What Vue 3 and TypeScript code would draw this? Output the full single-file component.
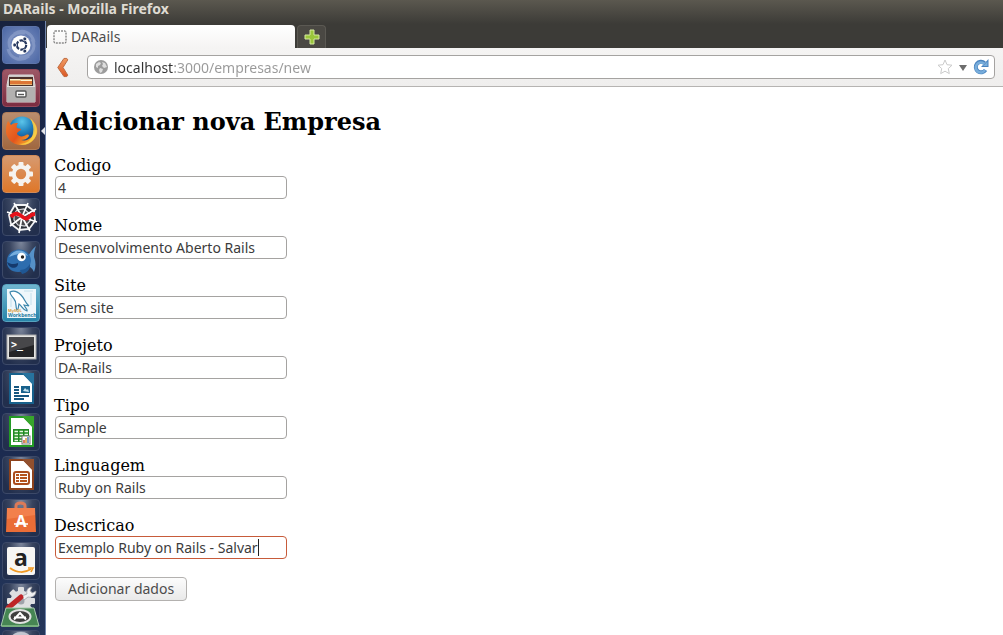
<script setup lang="ts">
import { computed, onMounted, ref } from 'vue'

interface Field {
  id: string
  label: string
  value: string
}

const fields = ref<Field[]>([
  { id: 'codigo', label: 'Codigo', value: '4' },
  { id: 'nome', label: 'Nome', value: 'Desenvolvimento Aberto Rails' },
  { id: 'site', label: 'Site', value: 'Sem site' },
  { id: 'projeto', label: 'Projeto', value: 'DA-Rails' },
  { id: 'tipo', label: 'Tipo', value: 'Sample' },
  { id: 'linguagem', label: 'Linguagem', value: 'Ruby on Rails' },
  { id: 'descricao', label: 'Descricao', value: 'Exemplo Ruby on Rails - Salvar' },
])
const activeId = 'descricao'

const host = 'localhost'
const address = ref(host + ':3000/empresas/new')
const hostWidth = ref(62)
const textWidth = ref(200)

function measure(text: string, font: string): number {
  const ctx = document.createElement('canvas').getContext('2d')
  if (!ctx) return 0
  ctx.font = font
  return Math.round(ctx.measureText(text).width)
}

const hostStop = computed(() => ({ '--host-width': hostWidth.value + 'px' }))
const caretPosition = computed(() => ({ left: textWidth.value + 3 + 'px' }))

onMounted(() => {
  hostWidth.value = measure(host, '14px "Noto Sans"')
  textWidth.value = measure(fields.value[6].value, '14px "Noto Sans"')
})

const gearTeeth = [0, 45, 90, 135, 180, 225, 270, 315]
</script>

<template>
  <div class="desktop">
    <header class="titlebar">DARails - Mozilla Firefox</header>
    <div class="workspace">
      <nav class="launcher" aria-label="Launcher">
        <button class="tile dash" type="button" aria-label="Dash">
          <svg viewBox="0 0 38 38">
            <g fill="none" stroke="#a9b9dc" stroke-opacity=".4" stroke-width="3">
              <path d="M9 24C3 13 12 5 23 7M30 13c6 11-3 19-13 18M12 8c9-6 18-1 20 8M27 30C18 37 8 32 6 23" />
            </g>
            <circle cx="19" cy="19" r="9.5" fill="#fff" />
            <circle cx="19.5" cy="19" r="4.7" fill="none" stroke="#26385f" stroke-width="2.2" stroke-dasharray="8.4 1.4" />
            <g fill="#26385f" stroke="#fff" stroke-width=".7">
              <circle cx="12.7" cy="19" r="1.9" /><circle cx="22.8" cy="12.9" r="1.9" /><circle cx="22.8" cy="25.1" r="1.9" />
            </g>
          </svg>
        </button>
        <button class="tile files" type="button" aria-label="Files">
          <svg viewBox="0 0 38 38">
            <path d="M7 6h24l2 10v17H5V16z" fill="#c9c7c5" stroke="#dddbda" />
            <rect x="7" y="8" width="24" height="9" fill="#4a302a" />
            <path d="M8 10h22v6H8z" fill="#e9b878" />
            <path d="M8 12h22v3H8z" fill="#dd7636" />
            <path d="M8 10.5h10l1 1h11" fill="none" stroke="#fff3cf" />
            <rect x="5" y="17" width="28" height="16" fill="#b3b1b0" />
            <path d="M5 17.500h28" stroke="#e2e0df" />
            <rect x="14" y="22" width="10" height="6" rx="1" fill="#fff" stroke="#555" stroke-width="1.4" />
            <path d="M16 25.5h6" stroke="#555" stroke-width="1.4" />
          </svg>
        </button>
        <div class="running">
          <button class="tile firefox" type="button" aria-label="Firefox">
            <svg viewBox="0 0 38 38">
              <defs>
                <radialGradient id="globe" cx=".5" cy=".2" r=".8">
                  <stop offset="0" stop-color="#5cc5ea" /><stop offset=".5" stop-color="#1f80bd" /><stop offset="1" stop-color="#153979" />
                </radialGradient>
                <linearGradient id="fox" x1="0" y1="0" x2="1" y2=".6">
                  <stop offset="0" stop-color="#f07a2c" /><stop offset=".55" stop-color="#e4551d" /><stop offset="1" stop-color="#f9b42d" />
                </linearGradient>
              </defs>
              <circle cx="20" cy="17.500" r="13" fill="url(#globe)" />
              <path d="M6 9l3 4c2-2 5-2 7-2-1 2-2 3-1 5l4 1c0 2-4 2-4 5 2 3 6 3 9 1 2-1 3 0 3 1-2 3-5 4-8 4 7 2 13-3 14-11 0-3-1-6-3-9 4 3 6 8 5 13-2 8-8 12-15 12C9 33 3 25 4 17c0-3 1-6 2-8z" fill="url(#fox)" />
              <path d="M28 6c8 6 9 16 3 22-4 4-9 6-14 4 8 0 13-4 14-11 1-5 0-10-3-15z" fill="#f8d24a" fill-opacity=".85" />
            </svg>
          </button>
        </div>
        <button class="tile settings" type="button" aria-label="System Settings">
          <svg viewBox="0 0 38 38">
            <g fill="#f6f3ef">
              <rect v-for="angle in gearTeeth" :key="angle" x="16.5" y="7" width="5" height="6" rx="1" :transform="`rotate(${angle} 19 19)`" />
            </g>
            <circle cx="19" cy="19" r="7.2" fill="none" stroke="#f6f3ef" stroke-width="4" />
          </svg>
        </button>
        <button class="tile" type="button" aria-label="Spider">
          <svg viewBox="0 0 38 38">
            <path d="M13 7h11l8 6 1 10-6 8-10 1-8-6-2-9z" fill="#2c3038" stroke="#f2f3f5" stroke-width="1.8" />
            <path d="M15 12l7-1 6 5v7l-5 5-7-1-4-5v-6z" fill="#4b4b4f" stroke="#d5d6da" stroke-width="1.2" />
            <path d="M20 19L12 5M20 19l6-14M20 19l14-8M20 19l15 5M20 19l8 14M20 19l-3 16M20 19L8 28M20 19L5 14" stroke="#fff" stroke-width="1.7" />
            <path d="M9 19c3-4 6-4 9-2s5 5 8 3c3-3 3-4 7-4" fill="none" stroke="#e5121a" stroke-width="3.800" />
          </svg>
        </button>
        <button class="tile" type="button" aria-label="Bluefish">
          <svg viewBox="0 0 38 38">
            <path d="M25 17c2-3 4-8 9-12-2 5-2 8-2 11 2 5 2 10 0 15-2-4-4-6-8-7z" fill="#5590c6" />
            <path d="M5 20C5 11 14 7 21 9c6 2 8 7 8 11-1 7-6 11-13 11C9 31 4 26 5 20z" fill="#2d6dae" />
            <path d="M7 16c4-8 15-9 19-1-6-3-13-2-19 1z" fill="#76aede" />
            <path d="M5 21c3 2 7 3 11 1 1 5-8 8-11-1z" fill="#153a6d" />
            <path d="M18 29c5 0 8-3 10-6 1 5-3 9-8 10z" fill="#1f5794" />
            <circle cx="19.500" cy="16" r="4.3" fill="#fff" /><circle cx="20.500" cy="16" r="1.7" fill="#222" />
          </svg>
        </button>
        <button class="tile workbench" type="button" aria-label="MySQL Workbench">
          <svg viewBox="0 0 38 38">
            <rect x="5" y="5" width="29" height="29" fill="#eef7fb" />
            <path d="M9 23V14M29 9v12M22 7h9" stroke="#c3e0ec" />
            <path d="M8 8c4-2 8 0 11 3 4 4 4 8 8 11l-5-1c2 4 4 5 3 6-4-1-5-5-8-7-1 3 0 5-2 6-2-4 0-8-3-11-2-3-4-4-4-7z" fill="#fff" stroke="#3b86ac" stroke-width="1.2" />
            <text x="6" y="28" font-size="4" font-weight="700" fill="#d99a35">MySQL</text>
            <text x="6" y="33" font-size="5" font-weight="700" fill="#23799f">Workbench</text>
          </svg>
        </button>
        <button class="tile" type="button" aria-label="Terminal">
          <svg viewBox="0 0 38 38">
            <rect x="5" y="8" width="29" height="24" fill="#e4e4e2" stroke="#aaa" />
            <rect x="7" y="10" width="25" height="20" fill="#242426" />
            <path d="M7 10h25v8L7 25z" fill="#47474a" />
            <text class="mono" x="9" y="21" font-size="10" font-weight="700" fill="#fff">&gt;_</text>
          </svg>
        </button>
        <button class="tile" type="button" aria-label="LibreOffice Writer">
          <svg viewBox="0 0 38 38">
            <path d="M8 4h14l9 9v20H8z" fill="#fff" stroke="#17618c" stroke-width="2" />
            <path d="M20 3h12v13z" fill="#27739e" />
            <path d="M12 17h5M12 20h5M12 23h5M12 26h15M12 29h10" stroke="#15567f" stroke-width="2" />
            <rect x="19" y="16" width="9" height="7" fill="#17618c" /><path d="M21 21l2-3 2 2 1-1 1 3z" fill="#c5e1ed" />
          </svg>
        </button>
        <button class="tile" type="button" aria-label="LibreOffice Calc">
          <svg viewBox="0 0 38 38">
            <path d="M8 4h14l9 9v20H8z" fill="#fff" stroke="#239a25" stroke-width="2" />
            <path d="M20 3h12v13z" fill="#37a52b" />
            <rect x="11" y="16" width="16" height="13" fill="#208b22" />
            <path d="M12.500 18.500h3.500M17.500 18.500h3.500M22.500 18.500h3.500M12.500 21.500h3.500M17.500 21.500h3.500M22.500 21.500h3.500M12.500 24.500h3.500M17.500 24.500h3.500M12.500 27.500h3.500M17.500 27.500h3.500" stroke="#e5f8df" stroke-width="1.7" />
            <rect x="20" y="23" width="8" height="8" fill="#fff" stroke="#777" />
            <path d="M22 30v-3" stroke="#c85335" stroke-width="1.5" /><path d="M24 30v-5" stroke="#d99b35" stroke-width="1.5" /><path d="M26 30v-6" stroke="#4878b0" stroke-width="1.5" />
          </svg>
        </button>
        <button class="tile" type="button" aria-label="LibreOffice Impress">
          <svg viewBox="0 0 38 38">
            <path d="M8 4h14l9 9v20H8z" fill="#fff" stroke="#8d421d" stroke-width="2" />
            <path d="M20 3h12v13z" fill="#91502e" />
            <rect x="12" y="16" width="15" height="12" rx="2" fill="#fff" stroke="#ab4c1d" stroke-width="2" />
            <path d="M14 19h3M18 19h7M14 22h3M18 22h7M14 25h3M18 25h7" stroke="#b4541f" stroke-width="1.8" />
          </svg>
        </button>
        <button class="tile" type="button" aria-label="Software Center">
          <svg viewBox="0 0 38 38">
            <path d="M14 11V7c0-4 9-4 9 0v4" fill="none" stroke="#dd7a57" stroke-width="3" />
            <path d="M5 9h28l1 24H4z" fill="#ea6d37" /><path d="M5 9h28v7L5 20z" fill="#f2804c" />
            <text x="19" y="28" font-size="16" font-weight="700" text-anchor="middle" fill="#fff">A</text>
            <path d="M12 25h14" stroke="#fff" stroke-width="1.5" />
          </svg>
        </button>
        <button class="tile" type="button" aria-label="Amazon">
          <svg viewBox="0 0 38 38">
            <rect x="5" y="5" width="28" height="28" rx="2" fill="#f7f6f4" />
            <text x="19" y="24" font-size="23" font-weight="700" text-anchor="middle" fill="#222">a</text>
            <path d="M8 26c7 5 15 5 21 1" fill="none" stroke="#f29a23" stroke-width="2" /><path d="M26 26h5l-2 4" fill="none" stroke="#f29a23" stroke-width="1.6" />
          </svg>
        </button>
        <div class="stack">
          <button class="tile" type="button" aria-label="System Tools">
            <svg viewBox="0 0 38 38">
              <g fill="#dedfe1">
                <rect v-for="angle in gearTeeth" :key="angle" x="16" y="4" width="6" height="7" rx="1" :transform="`rotate(${angle} 19 18)`" />
              </g>
              <circle cx="19" cy="18" r="7" fill="#9fa3ab" stroke="#dedfe1" stroke-width="7" />
              <path d="M20 13l5-2c-1-4 1-7 5-7l-2 4 2 2 4-2c0 4-3 7-8 6l-4 3z" fill="#f0f0f1" stroke="#9a9ba0" stroke-width=".7" />
              <path d="M6 25L19 14" stroke="#be2427" stroke-width="5" stroke-linecap="round" />
            </svg>
          </button>
          <button class="folded" type="button" aria-label="Software Updater">
            <svg viewBox="0 0 40 22">
              <path d="M6 1h28l5 18H1z" fill="#468553" stroke="#a8c9ad" />
              <path d="M2 18h36v2H2z" fill="#76af7c" />
              <ellipse cx="20" cy="9.500" rx="10.500" ry="6.500" fill="#3e3e3e" stroke="#e2e2e2" stroke-width="2" />
              <path d="M14 12.500l6-6.500 6 6.500M14 10.500h12" fill="none" stroke="#fff" stroke-width="2" />
            </svg>
          </button>
        </div>
        <button class="tile" type="button" aria-label="Disk">
          <svg viewBox="0 0 38 38"><ellipse cx="19" cy="7" rx="9" ry="5" fill="#c3c6d0" /></svg>
        </button>
      </nav>

      <div class="browser">
        <div class="tabs">
          <button class="tab" type="button">
            <svg class="favicon" viewBox="0 0 14 14"><rect x="1" y="1" width="12" height="12" rx="1" fill="none" stroke="#555" stroke-dasharray="2 1" /></svg>
            DARails
          </button>
          <button class="new-tab" type="button" aria-label="New tab">
            <svg viewBox="0 0 16 16"><path d="M6 1h4v5h5v4h-5v5H6v-5H1V6h5z" fill="#9ac63b" stroke="#d5e9a0" /></svg>
          </button>
        </div>
        <div class="toolbar">
          <button class="back" type="button" aria-label="Back">
            <svg viewBox="0 0 14 22">
              <defs><linearGradient id="arrow" x2="0" y2="1"><stop offset="0" stop-color="#f09b62" /><stop offset="1" stop-color="#dc5825" /></linearGradient></defs>
              <path d="M8 1.500h3l1 1.500-5 8 5 8-1 1.500H8L1.500 11z" fill="url(#arrow)" stroke="#bc6a40" stroke-linejoin="round" />
            </svg>
          </button>
          <div class="address">
            <svg class="world" viewBox="0 0 14 14">
              <circle cx="7" cy="7" r="7" fill="#9c9c9c" />
              <path d="M2 4l3-2 2 1-1 2-2 1v2L2 7zM8 2l3 1 2 4-3 1-2-2 1-2zM6 8l3 1-1 3-2 1-1-3z" fill="#dedede" />
            </svg>
            <input v-model="address" class="url" type="text" aria-label="Address" :style="hostStop" />
            <button class="icon star" type="button" aria-label="Bookmark">
              <svg viewBox="0 0 16 16"><path d="M8 1l2 4.700 5 .5-3.700 3.400 1 5L8 12.200 3.700 14.600l1-5L1 6.200l5-.5z" fill="#fff" stroke="#cbcbcb" stroke-linejoin="round" /></svg>
            </button>
            <button class="icon drop" type="button" aria-label="History">
              <svg viewBox="0 0 8 6"><path d="M0 0h8L4 6z" fill="#6d6d6d" /></svg>
            </button>
            <button class="icon reload" type="button" aria-label="Reload">
              <svg viewBox="0 0 16 16">
                <path d="M12.500 11a5.300 5.300 0 1 1-1-7" fill="none" stroke="#4a84bf" stroke-width="4" />
                <path d="M15.500 0v8H8z" fill="#4a84bf" />
                <path d="M12 11.200a5 5 0 1 1-1-6.500" fill="none" stroke="#78addb" stroke-width="2.500" />
                <path d="M14.500 2.500v4.500H10z" fill="#78addb" />
              </svg>
            </button>
          </div>
        </div>

        <main class="page">
          <h2>Adicionar nova Empresa</h2>
          <form @submit.prevent>
            <div v-for="field in fields" :key="field.id" class="field">
              <label :for="field.id">{{ field.label }}</label>
              <div class="box">
                <input :id="field.id" v-model="field.value" type="text" :class="{ active: field.id === activeId }" />
                <span v-if="field.id === activeId" class="caret" :style="caretPosition"></span>
              </div>
            </div>
            <button class="submit" type="submit">Adicionar dados</button>
          </form>
        </main>
      </div>
    </div>
  </div>
</template>

<style>
html,
body {
  margin: 0;
  background: #fff;
}
</style>

<style scoped>
.desktop {
  height: 100vh;
  display: flex;
  flex-direction: column;
  overflow: hidden;
  font: 14px/20px "Noto Sans", sans-serif;
  background: linear-gradient(#5b584f, #3c3b37 24px);
}
button,
input {
  box-sizing: border-box;
  margin: 0;
  padding: 0;
  border: 0;
  font: inherit;
  outline: 0;
}
button {
  background: none;
}
svg {
  display: block;
}
.titlebar {
  height: 21px;
  flex: none;
  padding-left: 3px;
  color: #dfdbd2;
  font-size: 14px;
  font-weight: 700;
  line-height: 18px;
}
.workspace {
  flex: 1;
  min-height: 0;
  display: flex;
}
.launcher {
  box-sizing: border-box;
  width: 46px;
  flex: none;
  display: flex;
  flex-direction: column;
  gap: 5px;
  padding: 5px 0 0 2px;
  overflow: hidden;
  background: linear-gradient(#17223f, #1b2a50 30%, #1c2b50 70%, #24365a);
  border-right: 1px solid #7185ab;
}
.tile {
  width: 38px;
  height: 38px;
  flex: none;
  border: 1px solid #3c4968;
  border-radius: 4px;
  background: radial-gradient(ellipse at 50% 0, #7c869b, #38445f 45%, #222f4d 80%);
}
.tile svg {
  width: 38px;
  height: 38px;
  margin: -1px;
}
.dash {
  background: radial-gradient(#8296c4, #4b66a4);
  border-color: #5d74a9;
}
.files {
  background: linear-gradient(#9c5866, #7c2c40);
  border-color: #95485a;
}
.firefox {
  background: linear-gradient(#b98d6e, #a0673f);
  border-color: #ae7c59;
}
.settings {
  background: linear-gradient(#d79a70, #df7729);
  border-color: #d08a58;
}
.workbench {
  background: linear-gradient(#70b5d0, #2785aa);
  border-color: #58a3be;
}
.mono {
  font-family: "DejaVu Sans Mono", monospace;
}
.running {
  display: flex;
  align-items: center;
  justify-content: space-between;
}
.running::after {
  content: "";
  border: 4px solid transparent;
  border-right-color: #e3e5ea;
  border-left: 0;
}
.stack {
  position: relative;
  height: 40px;
  flex: none;
}
.stack .tile {
  margin-top: -2px;
}
.folded {
  position: absolute;
  left: -2px;
  top: 22px;
  width: 40px;
  height: 22px;
}
.browser {
  flex: 1;
  min-width: 0;
  display: flex;
  flex-direction: column;
}
.tabs {
  display: flex;
  align-items: flex-end;
  gap: 2px;
  height: 27px;
  flex: none;
  padding-left: 1px;
}
.tab {
  display: flex;
  align-items: center;
  gap: 4px;
  width: 248px;
  height: 23px;
  padding-left: 6px;
  border-radius: 4px 4px 0 0;
  background: linear-gradient(#fff, #f5f4f3);
  color: #4c4c4c;
}
.favicon {
  width: 14px;
  height: 14px;
}
.new-tab {
  display: grid;
  place-items: center;
  width: 29px;
  height: 23px;
  border: 1px solid #5b5953;
  border-bottom: 0;
  border-radius: 4px 4px 0 0;
  background: #4a4843;
}
.new-tab svg {
  width: 16px;
  height: 16px;
}
.toolbar {
  box-sizing: border-box;
  height: 39px;
  flex: none;
  display: flex;
  align-items: center;
  gap: 17px;
  padding: 0 8px 0 10px;
  background: linear-gradient(#f5f4f3, #efeeed);
  border-bottom: 1px solid #b6b4b2;
}
.back,
.back svg {
  width: 14px;
  height: 21px;
}
.address {
  box-sizing: border-box;
  flex: 1;
  height: 24px;
  display: flex;
  align-items: center;
  padding: 0 5px 0 6px;
  border: 1px solid #a5a3a1;
  border-radius: 4px;
  background: #fff;
}
.world {
  width: 14px;
  height: 14px;
  margin-right: 6px;
}
.url {
  flex: 1;
  min-width: 0;
  height: 22px;
  color: transparent;
  background: linear-gradient(90deg, #333 var(--host-width), #999 var(--host-width));
  background-clip: text;
  -webkit-background-clip: text;
}
.star svg,
.reload svg {
  width: 16px;
  height: 16px;
}
.drop {
  margin: 2px 6px 0;
}
.drop svg {
  width: 8px;
  height: 6px;
}
.page {
  flex: 1;
  min-height: 0;
  padding: 21px 8px 0;
  background: #fff;
  color: #000;
}
h2 {
  margin: 0 0 20px;
  font: 700 24px/28px "DejaVu Serif", serif;
}
.field {
  margin-bottom: 17px;
}
.field label {
  display: block;
  font: 16px/20px "DejaVu Serif", serif;
}
.box {
  position: relative;
  width: 232px;
  margin-left: 1px;
}
.box input {
  display: block;
  width: 100%;
  height: 23px;
  padding: 0 2px;
  border: 1px solid #a5a3a1;
  border-radius: 4px;
  background: #fff;
  color: #3c3c3c;
}
.box input.active {
  border-color: #c75b3a;
}
.caret {
  position: absolute;
  top: 3px;
  width: 1px;
  height: 17px;
  background: #222;
}
.submit {
  height: 24px;
  margin: 1px 0 0 1px;
  padding: 0 12px;
  border: 1px solid #b3b1af;
  border-radius: 4px;
  background: linear-gradient(#fcfcfc, #e9e9e9);
  color: #4c4c4c;
}
</style>
